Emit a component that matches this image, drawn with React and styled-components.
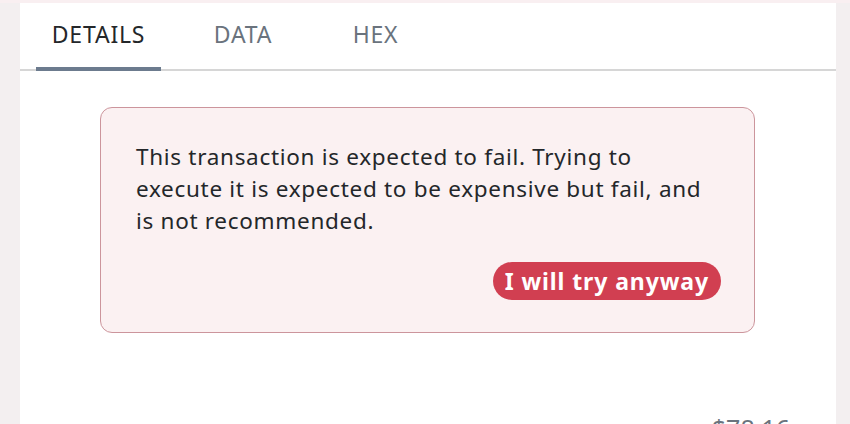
import React, { useState } from 'react';
import styled, { createGlobalStyle } from 'styled-components';

// GLOBAL
const GlobalStyle = createGlobalStyle`
  html, body {
    margin: 0;
    padding: 0;
    height: 100%;
    overflow: hidden;
    background: #f3eff0;
  }
  #root {
    height: 100%;
  }
`;

// STYLES
const Page = styled.div`
  height: 424px;
  padding: 3px 14px 0 20px;
  box-sizing: border-box;
  background: linear-gradient(#f9eff1 0 3px, #f3eff0 3px);
  font-family: "Noto Sans", Lato, sans-serif;
`;

const Panel = styled.main`
  height: 100%;
  background: #ffffff;
  display: flex;
  flex-direction: column;
  overflow: hidden;
`;

const TabBar = styled.nav`
  display: flex;
  flex-shrink: 0;
  padding-left: 16px;
  border-bottom: 2px solid #d6d6d6;
  height: 66px;
`;

const Tab = styled.button`
  border: none;
  background: none;
  padding: 0 0 3px;
  width: ${p => p.$width}px;
  font-family: inherit;
  font-size: 23px;
  letter-spacing: 0.8px;
  text-transform: uppercase;
  color: ${p => (p.$active ? '#24272a' : '#6a737d')};
  border-bottom: 4px solid ${p => (p.$active ? '#6c7b8e' : 'transparent')};
  margin-bottom: -2px;
  cursor: pointer;
`;

const Content = styled.section`
  flex-shrink: 0;
  padding: 36px 81px 0 80px;
`;

const Warning = styled.div`
  border: 1px solid #cc959c;
  background: #fbf1f2;
  border-radius: 12px;
  padding: 33px 33px 32px 35px;
  display: flex;
  flex-direction: column;
`;

const WarningText = styled.p`
  margin: 0;
  max-width: 572px;
  font-size: 22.5px;
  letter-spacing: 0.7px;
  line-height: 32px;
  color: #24272a;
`;

const TryButton = styled.button`
  align-self: flex-end;
  margin-top: 25px;
  height: 38px;
  padding: 0 12px;
  border: none;
  border-radius: 19px;
  background: #d13f51;
  color: #ffffff;
  font-family: inherit;
  font-weight: 700;
  font-size: 23px;
  letter-spacing: 0.9px;
  cursor: pointer;
`;

const Footer = styled.div`
  display: flex;
  justify-content: flex-end;
  padding: 78px 46px 0 0;
`;

const Fiat = styled.span`
  font-size: 25px;
  color: #6a737d;
`;

const tabs = [
  { key: 'details', label: 'Details', width: 125 },
  { key: 'data', label: 'Data', width: 164 },
  { key: 'hex', label: 'Hex', width: 101 },
];

const App = () => {
  const [active, setActive] = useState('details');

  return (
    <>
      <GlobalStyle />
      <Page>
        <Panel>
          <TabBar>
            {tabs.map(t => (
              <Tab
                key={t.key}
                $width={t.width}
                $active={active === t.key}
                onClick={() => setActive(t.key)}
              >
                {t.label}
              </Tab>
            ))}
          </TabBar>
          <Content>
            <Warning>
              <WarningText>
                This transaction is expected to fail. Trying to execute it is expected to be
                expensive but fail, and is not recommended.
              </WarningText>
              <TryButton>I will try anyway</TryButton>
            </Warning>
          </Content>
          <Footer>
            <Fiat>$78.16</Fiat>
          </Footer>
        </Panel>
      </Page>
    </>
  );
};

export default App;
